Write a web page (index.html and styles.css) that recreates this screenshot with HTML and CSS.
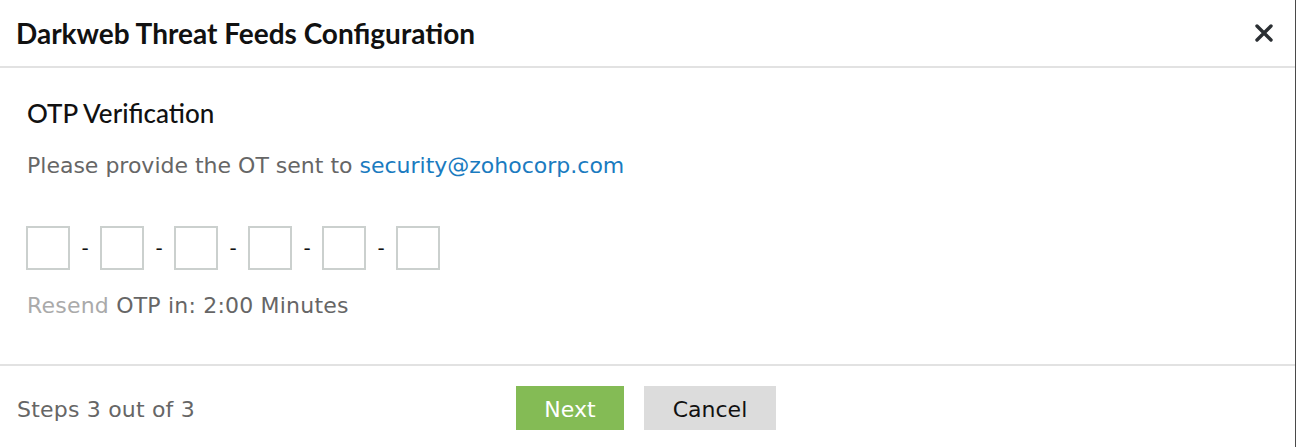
FILE: index.html
```html
<!DOCTYPE html>
<html>
<head>
<meta charset="utf-8">
<link rel="stylesheet" href="styles.css">
</head>
<body>
<div class="dialog">
  <div class="header">
    <h1 class="title">Darkweb Threat Feeds Configuration</h1>
    <button class="close" aria-label="Close">
      <svg width="18" height="18" viewBox="0 0 18 18"><path d="M2 2 L16 16 M16 2 L2 16" stroke="#2b2f33" stroke-width="3.4" stroke-linecap="round"/></svg>
    </button>
  </div>
  <div class="content">
    <h2 class="subtitle">OTP Verification</h2>
    <p class="desc">Please provide the OT sent to <a class="mail" href="#">security@zohocorp.com</a></p>
    <div class="otp">
      <input class="digit" type="text" maxlength="1"><span class="dash">-</span>
      <input class="digit" type="text" maxlength="1"><span class="dash">-</span>
      <input class="digit" type="text" maxlength="1"><span class="dash">-</span>
      <input class="digit" type="text" maxlength="1"><span class="dash">-</span>
      <input class="digit" type="text" maxlength="1"><span class="dash">-</span>
      <input class="digit" type="text" maxlength="1">
    </div>
    <p class="resend"><span class="resend-link">Resend</span> OTP in: 2:00 Minutes</p>
  </div>
  <div class="footer">
    <div class="steps">Steps 3 out of 3</div>
    <div class="actions">
      <button class="btn btn-next">Next</button>
      <button class="btn btn-cancel">Cancel</button>
    </div>
  </div>
</div>
</body>
</html>
```

FILE: styles.css
```css
html, body {
  margin: 0;
  padding: 0;
  background: #ffffff;
}
.dialog {
  width: 1295px;
  height: 447px;
  border-right: 1px solid #4a4a4a;
  display: flex;
  flex-direction: column;
  font-family: "DejaVu Sans", Verdana, sans-serif;
}
.header {
  height: 66px;
  border-bottom: 2px solid #e2e2e2;
  display: flex;
  align-items: center;
  justify-content: space-between;
  padding: 0 22px 0 16px;
}
.title {
  margin: 0;
  font-family: Lato, "Open Sans", sans-serif;
  font-weight: 700;
  font-size: 28px;
  line-height: 34px;
  color: #111;
}
.close {
  border: 0;
  background: none;
  padding: 0;
  width: 18px;
  height: 18px;
  display: flex;
}
.content {
  height: 296px;
  border-bottom: 2px solid #e2e2e2;
  padding: 0 27px;
}
.subtitle {
  margin: 30px 0 0;
  font-family: Lato, "Open Sans", sans-serif;
  font-weight: 500;
  font-size: 26px;
  line-height: 30px;
  color: #111;
}
.desc {
  margin: 25px 0 0;
  font-size: 22px;
  line-height: 26px;
  color: #666;
}
.mail {
  color: #1a7bc0;
  text-decoration: none;
}
.otp {
  margin-top: 47px;
  display: flex;
  align-items: center;
  margin-left: -1px;
}
.digit {
  box-sizing: border-box;
  width: 44px;
  height: 44px;
  border: 2px solid #cbd0ce;
  padding: 0;
  margin: 0;
  background: #fff;
}
.dash {
  width: 30px;
  text-align: center;
  font-size: 20px;
  color: #111;
}
.resend {
  margin: 23px 0 0;
  font-size: 22px;
  line-height: 26px;
  letter-spacing: 0.2px;
  color: #666;
}
.resend-link {
  color: #aaa;
}
.footer {
  flex: 1;
  display: flex;
  align-items: center;
  position: relative;
  padding: 0 17px;
}
.steps {
  font-size: 22px;
  line-height: 26px;
  letter-spacing: 0.2px;
  color: #666;
  margin-top: 7px;
}
.actions {
  position: absolute;
  left: 516px;
  top: 20px;
  display: flex;
  gap: 20px;
}
.btn {
  height: 44px;
  border: 0;
  font-family: "DejaVu Sans", Verdana, sans-serif;
  font-size: 22px;
  padding: 3px 0 0;
}
.btn-next {
  width: 108px;
  background: #84bb55;
  color: #fff;
}
.btn-cancel {
  width: 132px;
  background: #dcdcdc;
  color: #111;
}
```
